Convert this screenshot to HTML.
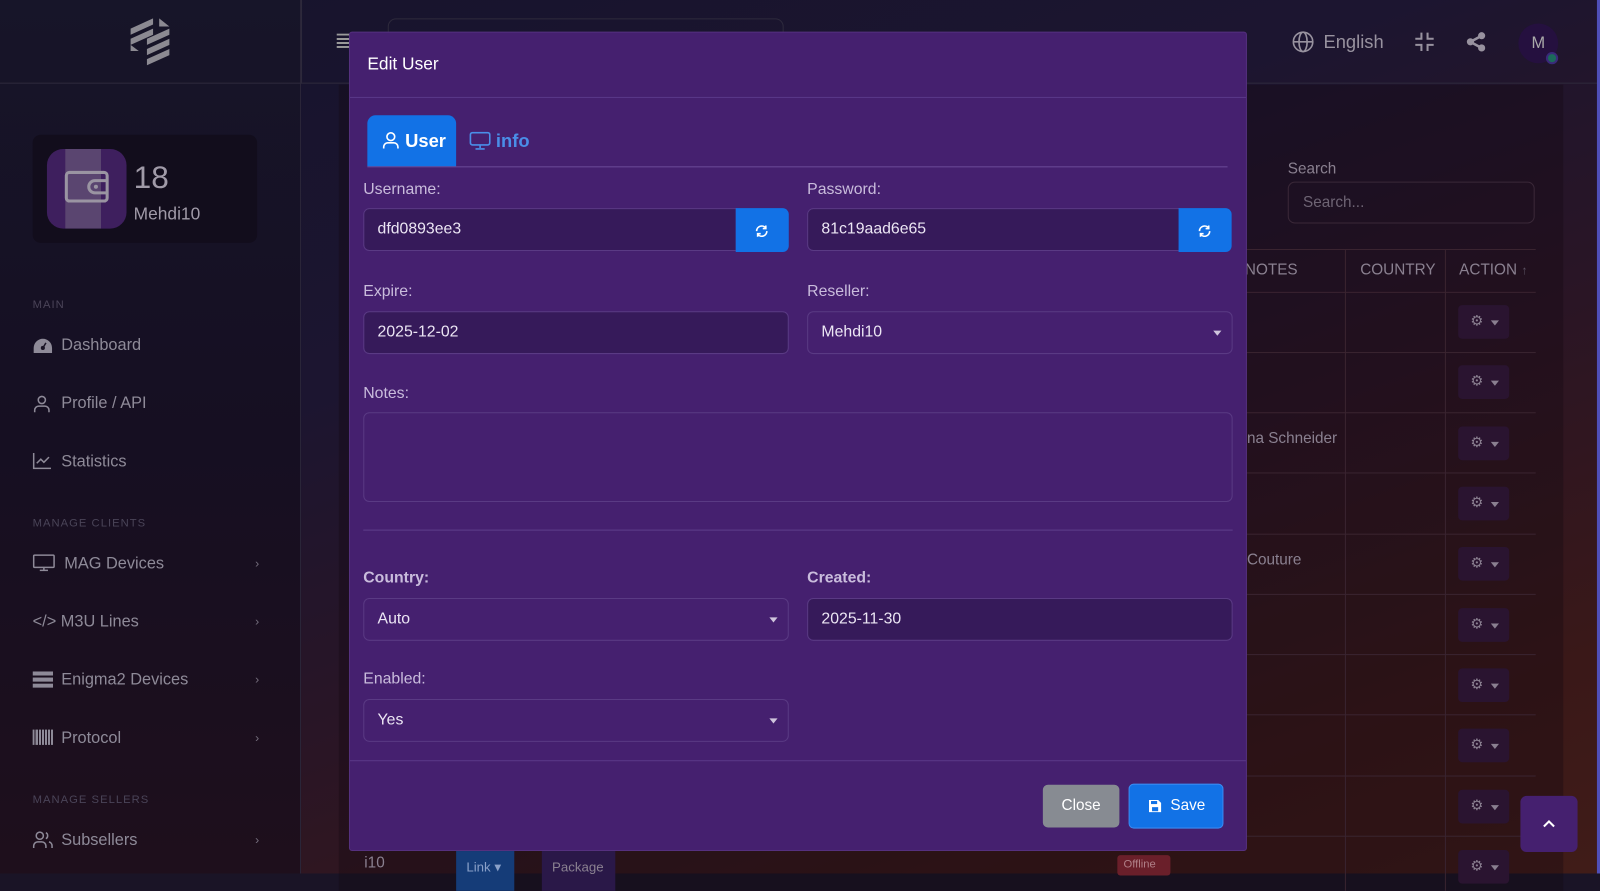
<!DOCTYPE html>
<html><head><meta charset="utf-8"><style>
*{box-sizing:border-box;margin:0;padding:0}
body{width:1600px;height:873px;overflow:hidden;font-family:"Liberation Sans",sans-serif;background:#1a1426;position:relative;color:#ccc}
#wrap{position:absolute;left:0;top:0;width:1568px;height:856px;transform:scale(1.020408);transform-origin:0 0}
.a{position:absolute}
#bg{left:0;top:0;width:1568px;height:856px;background:linear-gradient(160deg,#16142c 0%,#1c1530 35%,#2a1525 60%,#3a1818 85%,#401c18 100%)}
#side{left:0;top:0;width:295px;height:856px;background:linear-gradient(180deg,#171529 0%,#160f22 50%,#1e0f1c 100%);border-right:1px solid #2a2538}
#top{left:0;top:0;width:1568px;height:82px;border-bottom:1px solid #2e2a3c}
#main{left:332px;top:83px;width:1200px;height:790px;background:rgba(20,10,18,.35)}
.nav{left:60px;font-size:16px;color:#8e8a98}
.ic{left:32px}
.sec{left:32px;font-size:11px;letter-spacing:1px;color:#4a4458}
.chev{left:250px;color:#77707f;font-size:12px}
.gear{left:1429px;width:50px;height:33px;background:#2a1430;border-radius:4px}
.gear span{position:absolute;left:12px;top:7px;font-size:14px;color:#8a7f90}
.gear i{position:absolute;left:32px;top:15px;border:4px solid transparent;border-top:5px solid #8a7f90}
.rl{left:1210px;width:295px;height:1px;background:#3a2430}
#modal{left:342px;top:31px;width:880px;height:803px;background:#45206f;border:1px solid #55307f;border-radius:3px}
.lbl{font-size:15.5px;color:#c9bcdc}
.inp{height:42px;border:1px solid #5a3a84;border-radius:6px;font-size:15.5px;color:#ece6f4;padding:11px 13px}
.dk{background:#361a5a}
.btnb{background:#1272e6;border-radius:0 6px 6px 0;width:52px;height:43px}
.car{position:absolute;right:10px;top:18px;border:4px solid transparent;border-top:5px solid #cfc4dc}
</style></head><body><div id="wrap">
<div id="bg" class="a"></div>
<div id="side" class="a"></div>
<div id="top" class="a"></div>
<div class="a" style="left:295px;top:0;width:1px;height:82px;background:#2e2a3c"></div>
<div id="main" class="a"></div>
<div class="a" style="left:1565px;top:0;width:3px;height:856px;background:#4f4fb8"></div>
<div class="a" style="left:380px;top:18px;width:388px;height:40px;border:1px solid #2e2a3c;border-radius:8px"></div>
<svg class="a" style="left:126px;top:16px" width="42" height="50" viewBox="0 0 42 50"><g fill="#8c8a92"><polygon points="2,12 24,2 24,8 2,18"/><polygon points="2,22 24,12 24,18 2,28"/><polygon points="2,28 10,34 2,34"/><polygon points="18,22 40,12 40,18 18,28"/><polygon points="18,32 40,22 40,28 18,38"/><polygon points="18,42 40,32 40,38 18,48"/><polygon points="30,2 40,10 30,10"/></g></svg>
<div class="a" style="left:330px;top:33px;width:13px;height:14px;background:repeating-linear-gradient(#999 0 2px,transparent 2px 4px)"></div>
<div class="a" style="left:32px;top:132px;width:220px;height:106px;background:#120d1c;border-radius:8px"></div>
<div class="a" style="left:46px;top:146px;width:78px;height:78px;background:#3e1f5e;border-radius:16px;overflow:hidden"><div class="a" style="left:18px;top:0;width:35px;height:78px;background:#5a4570"></div></div>
<svg class="a" style="left:63px;top:165px" width="46" height="36" viewBox="0 0 46 36"><rect x="2" y="4" width="40" height="28" rx="3" fill="none" stroke="#9a94a2" stroke-width="3"/><path d="M42 12h-12a5 5 0 0 0 0 12h12" fill="none" stroke="#9a94a2" stroke-width="3"/><circle cx="31" cy="18" r="2" fill="#9a94a2"/></svg>
<div class="a" style="left:131px;top:156px;font-size:31px;color:#a09aa8">18</div>
<div class="a" style="left:131px;top:200px;font-size:17px;color:#a09aa8">Mehdi10</div>
<div class="a sec" style="top:293px">MAIN</div>
<svg class="a ic" style="top:331px" width="20" height="16" viewBox="0 0 20 16"><path d="M10 1a9 9 0 0 0-9 9v5h18v-5a9 9 0 0 0-9-9z" fill="#8e8a98"/><circle cx="10" cy="10" r="2" fill="#1a1426"/><path d="M10 10l3-5" stroke="#1a1426" stroke-width="1.5"/></svg>
<div class="a nav" style="top:330px">Dashboard</div>
<svg class="a ic" style="top:387px" width="18" height="18" viewBox="0 0 18 18" fill="none" stroke="#8e8a98" stroke-width="1.5"><circle cx="9" cy="5" r="3.5"/><path d="M2 17v-2a4 4 0 0 1 4-4h6a4 4 0 0 1 4 4v2"/></svg>
<div class="a nav" style="top:387px">Profile / API</div>
<svg class="a ic" style="top:444px" width="18" height="16" viewBox="0 0 18 16" fill="none" stroke="#8e8a98" stroke-width="1.5"><path d="M1 0v15h17M4 10l4-4 3 3 5-5"/></svg>
<div class="a nav" style="top:444px">Statistics</div>
<div class="a sec" style="top:507px">MANAGE CLIENTS</div>
<svg class="a ic" style="top:543px" width="22" height="17" viewBox="0 0 22 17" fill="none" stroke="#8e8a98" stroke-width="1.5"><rect x="1" y="1" width="20" height="12" rx="1"/><path d="M11 13v3M7 16h8"/></svg>
<div class="a nav" style="top:544px;left:63px">MAG Devices</div><div class="a chev" style="top:545px">›</div>
<div class="a nav" style="top:601px;left:32px">&lt;/&gt; M3U Lines</div><div class="a chev" style="top:602px">›</div>
<svg class="a ic" style="top:658px" width="20" height="16" viewBox="0 0 20 16" fill="#8e8a98"><rect x="0" y="0" width="20" height="4"/><rect x="0" y="6" width="20" height="4"/><rect x="0" y="12" width="20" height="4"/></svg>
<div class="a nav" style="top:658px">Enigma2 Devices</div><div class="a chev" style="top:659px">›</div>
<div class="a ic" style="top:715px;width:20px;height:15px;background:repeating-linear-gradient(90deg,#8e8a98 0 2px,transparent 2px 3px)"></div>
<div class="a nav" style="top:715px">Protocol</div><div class="a chev" style="top:716px">›</div>
<div class="a sec" style="top:778px">MANAGE SELLERS</div>
<svg class="a ic" style="top:814px" width="20" height="18" viewBox="0 0 20 18" fill="none" stroke="#8e8a98" stroke-width="1.5"><circle cx="7" cy="5" r="3.5"/><path d="M1 17v-2a4 4 0 0 1 4-4h4a4 4 0 0 1 4 4v2M13 2a3.5 3.5 0 0 1 0 6M16 11a4 4 0 0 1 3 4v2"/></svg>
<div class="a nav" style="top:815px">Subsellers</div><div class="a chev" style="top:816px">›</div>
<svg class="a" style="left:1266px;top:30px" width="22" height="22" viewBox="0 0 22 22" fill="none" stroke="#98929f" stroke-width="1.6"><circle cx="11" cy="11" r="9.5"/><ellipse cx="11" cy="11" rx="4" ry="9.5"/><path d="M1.5 11h19"/></svg>
<div class="a" style="left:1297px;top:31px;font-size:18px;color:#98929f">English</div>
<svg class="a" style="left:1386px;top:31px" width="20" height="20" viewBox="0 0 20 20" fill="none" stroke="#98929f" stroke-width="2"><path d="M7 1v6H1M13 1v6h6M7 19v-6H1M13 19v-6h6"/></svg>
<svg class="a" style="left:1437px;top:31px" width="20" height="20" viewBox="0 0 20 20" fill="#98929f"><circle cx="15" cy="4" r="3.5"/><circle cx="4" cy="10" r="3.5"/><circle cx="15" cy="16" r="3.5"/><path d="M4 10L15 4M4 10l11 6" stroke="#98929f" stroke-width="2.5"/></svg>
<div class="a" style="left:1488px;top:23px;width:39px;height:39px;border-radius:50%;background:#25103f;color:#aaa;font-size:16px;text-align:center;line-height:39px">M</div>
<div class="a" style="left:1515px;top:51px;width:12px;height:12px;border-radius:50%;background:#1b6a5a;border:2px solid #3a2a7a"></div>
<div class="a" style="left:1262px;top:157px;font-size:15px;color:#8a8090">Search</div>
<div class="a" style="left:1262px;top:178px;width:242px;height:41px;border:1px solid #3a2838;border-radius:7px;font-size:15px;color:#6e6474;padding:11px 14px">Search...</div>
<div class="a rl" style="top:244px"></div>
<div class="a" style="left:1220px;top:256px;font-size:15px;color:#8a8090">NOTES</div>
<div class="a" style="left:1333px;top:256px;font-size:15px;color:#8a8090">COUNTRY</div>
<div class="a" style="left:1430px;top:256px;font-size:15px;color:#8a8090">ACTION <span style="color:#5a5060;font-size:12px">↑</span></div>
<div class="a" style="left:1318px;top:244px;width:1px;height:629px;background:#3a2430"></div>
<div class="a" style="left:1416px;top:244px;width:1px;height:629px;background:#3a2430"></div>
<div class="a rl" style="top:286px"></div><div class="a rl" style="top:345px"></div><div class="a rl" style="top:404px"></div><div class="a rl" style="top:463px"></div><div class="a rl" style="top:523px"></div><div class="a rl" style="top:582px"></div><div class="a rl" style="top:641px"></div><div class="a rl" style="top:700px"></div><div class="a rl" style="top:760px"></div><div class="a rl" style="top:819px"></div>
<div class="a" style="left:1222px;top:421px;font-size:15px;color:#8a8090">na Schneider</div>
<div class="a" style="left:1222px;top:540px;font-size:15px;color:#8a8090">Couture</div>
<div class="a gear" style="top:299px"><span>⚙</span><i></i></div>
<div class="a gear" style="top:358px"><span>⚙</span><i></i></div>
<div class="a gear" style="top:418px"><span>⚙</span><i></i></div>
<div class="a gear" style="top:477px"><span>⚙</span><i></i></div>
<div class="a gear" style="top:536px"><span>⚙</span><i></i></div>
<div class="a gear" style="top:596px"><span>⚙</span><i></i></div>
<div class="a gear" style="top:655px"><span>⚙</span><i></i></div>
<div class="a gear" style="top:714px"><span>⚙</span><i></i></div>
<div class="a gear" style="top:774px"><span>⚙</span><i></i></div>
<div class="a gear" style="top:833px"><span>⚙</span><i></i></div>
<div class="a" style="left:1490px;top:780px;width:56px;height:55px;background:#45206f;border-radius:6px"></div>
<svg class="a" style="left:1512px;top:803px" width="12" height="8" viewBox="0 0 12 8" fill="none" stroke="#fff" stroke-width="2"><path d="M1 7l5-5 5 5"/></svg>
<div class="a" style="left:357px;top:837px;font-size:15px;color:#8a8090">i10</div>
<div class="a" style="left:447px;top:834px;width:57px;height:39px;background:#153c78;color:#8aa0c8;font-size:13px;padding:8px 10px">Link ▾</div>
<div class="a" style="left:531px;top:834px;width:72px;height:39px;background:#2a1848;color:#8a8090;font-size:13px;padding:8px 10px">Package</div>
<div class="a" style="left:1095px;top:838px;width:52px;height:20px;background:#6a1f2a;color:#b08088;font-size:11px;padding:3px 6px;border-radius:3px">Offline</div>
<div id="modal" class="a"></div>
<div class="a" style="left:360px;top:53px;font-size:17px;color:#fff">Edit User</div>
<div class="a" style="left:343px;top:95px;width:878px;height:1px;background:#5a3888"></div>
<div class="a" style="left:360px;top:113px;width:87px;height:50px;background:#1272e6;border-radius:8px 8px 0 0"></div>
<svg class="a" style="left:375px;top:129px" width="16" height="17" viewBox="0 0 16 17" fill="none" stroke="#fff" stroke-width="1.6"><circle cx="8" cy="5" r="3.8"/><path d="M1 16.5v-1.5a4 4 0 0 1 4-4h6a4 4 0 0 1 4 4v1.5"/></svg>
<div class="a" style="left:397px;top:128px;font-size:18px;color:#fff;font-weight:bold">User</div>
<svg class="a" style="left:460px;top:129px" width="21" height="18" viewBox="0 0 21 18" fill="none" stroke="#4a8ee8" stroke-width="1.6"><rect x="1" y="1" width="19" height="12" rx="2"/><path d="M10.5 13v3M6 17h9"/></svg>
<div class="a" style="left:486px;top:128px;font-size:18px;color:#4a8ee8;font-weight:bold">info</div>
<div class="a" style="left:360px;top:163px;width:843px;height:1px;background:#6a4a98"></div>
<div class="a lbl" style="left:356px;top:177px">Username:</div>
<div class="a lbl" style="left:791px;top:177px">Password:</div>
<div class="a inp dk" style="left:356px;top:204px;width:366px;border-radius:6px 0 0 6px">dfd0893ee3</div>
<div class="a btnb" style="left:721px;top:204px"></div>
<div class="a inp dk" style="left:791px;top:204px;width:366px;border-radius:6px 0 0 6px">81c19aad6e65</div>
<div class="a btnb" style="left:1155px;top:204px"></div>
<svg class="a" style="left:740px;top:220px" width="13" height="13" viewBox="0 0 13 13" fill="none" stroke="#fff" stroke-width="1.6"><path d="M1.5 6.5a5 5 0 0 1 9-3M11.5 6.5a5 5 0 0 1-9 3"/><path d="M10.5 1v3h-3M2.5 12V9h3"/></svg>
<svg class="a" style="left:1174px;top:220px" width="13" height="13" viewBox="0 0 13 13" fill="none" stroke="#fff" stroke-width="1.6"><path d="M1.5 6.5a5 5 0 0 1 9-3M11.5 6.5a5 5 0 0 1-9 3"/><path d="M10.5 1v3h-3M2.5 12V9h3"/></svg>
<div class="a lbl" style="left:356px;top:277px">Expire:</div>
<div class="a lbl" style="left:791px;top:277px">Reseller:</div>
<div class="a inp dk" style="left:356px;top:305px;width:417px">2025-12-02</div>
<div class="a inp" style="left:791px;top:305px;width:417px">Mehdi10<i class="car"></i></div>
<div class="a lbl" style="left:356px;top:377px">Notes:</div>
<div class="a inp" style="left:356px;top:404px;width:852px;height:88px"></div>
<div class="a" style="left:356px;top:519px;width:852px;height:1px;background:#5e3e8c"></div>
<div class="a lbl" style="left:356px;top:558px;font-weight:bold">Country:</div>
<div class="a lbl" style="left:791px;top:558px;font-weight:bold">Created:</div>
<div class="a inp" style="left:356px;top:586px;width:417px">Auto<i class="car"></i></div>
<div class="a inp dk" style="left:791px;top:586px;width:417px">2025-11-30</div>
<div class="a lbl" style="left:356px;top:657px">Enabled:</div>
<div class="a inp" style="left:356px;top:685px;width:417px">Yes<i class="car"></i></div>
<div class="a" style="left:343px;top:745px;width:878px;height:1px;background:#5a3888"></div>
<div class="a" style="left:1022px;top:769px;width:75px;height:42px;background:#878b92;border-radius:5px;color:#fff;font-size:15px;text-align:center;line-height:42px">Close</div>
<div class="a" style="left:1106px;top:768px;width:93px;height:44px;background:#1272e6;border:1px solid #3a8af0;border-radius:5px;color:#fff;font-size:15px;line-height:42px;padding-left:40px">Save</div>
<svg class="a" style="left:1126px;top:784px" width="12" height="12" viewBox="0 0 12 12"><path d="M0 0h9l3 3v9H0z" fill="#fff"/><rect x="2" y="1" width="6" height="3" fill="#1272e6"/><rect x="3" y="7" width="6" height="4" fill="#1272e6"/></svg>
</div></body></html>
